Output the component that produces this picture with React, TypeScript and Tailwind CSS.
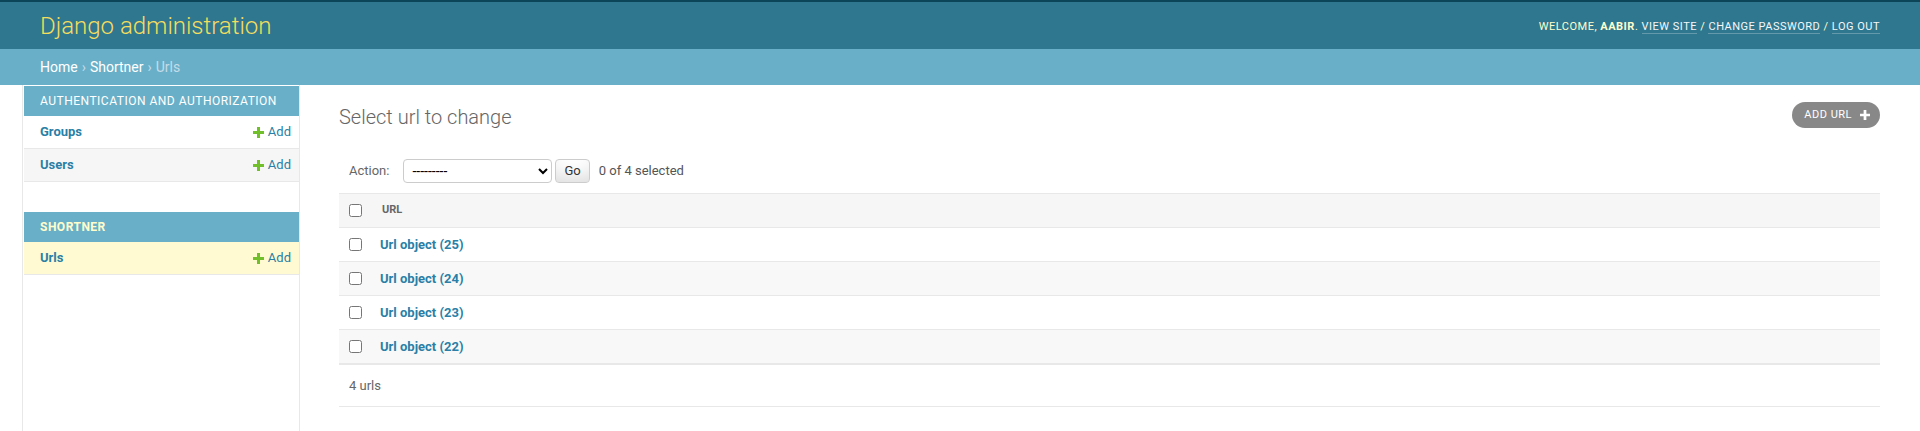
import { useState } from "react";

const LINK = "text-[#2a7fa6]";

function PlusIcon({ color = "#70bf2b", size = 11 }: { color?: string; size?: number }) {
  return (
    <svg width={size} height={size} viewBox="0 0 11 11" className="inline-block shrink-0">
      <path d="M4 0h3v4h4v3H7v4H4V7H0V4h4z" fill={color} />
    </svg>
  );
}

const apps = [
  {
    name: "Authentication and Authorization",
    current: false,
    models: [
      { name: "Groups", current: false },
      { name: "Users", current: false },
    ],
  },
  {
    name: "Shortner",
    current: true,
    models: [{ name: "Urls", current: true }],
  },
];

const urls = [25, 24, 23, 22];

export default function App() {
  const [checked, setChecked] = useState<Record<number, boolean>>({});
  const count = Object.values(checked).filter(Boolean).length;

  return (
    <div className="min-h-[431px] bg-white font-['Roboto','Liberation_Sans',sans-serif] text-[14px] text-[#333] flex flex-col">
      {/* Header */}
      <header className="h-[49px] border-t-2 border-[#0c4557] bg-[#2f778f] px-10 flex items-center justify-between">
        <h1 className="text-[24px] font-light text-[#f5dd5d] leading-[28px]">Django administration</h1>
        <div className="text-[11px] uppercase tracking-[0.5px] text-[#ffc] leading-[14px] pt-[2px]">
          Welcome, <strong className="font-bold">aabir</strong>.{" "}
          <a className="text-[#f4f8fa] border-b border-white/25">View site</a> /{" "}
          <a className="text-[#f4f8fa] border-b border-white/25">Change password</a> /{" "}
          <a className="text-[#f4f8fa] border-b border-white/25">Log out</a>
        </div>
      </header>

      {/* Breadcrumbs */}
      <div className="h-[36px] bg-[#6aafc8] px-10 flex items-center text-[14px] text-[#c4dce8]">
        <a className="text-white">Home</a>
        <span className="mx-[4px]">›</span>
        <a className="text-white">Shortner</a>
        <span className="mx-[4px]">›</span>
        <span>Urls</span>
      </div>

      <div className="flex flex-1">
        {/* Sidebar toggle */}
        <div className="w-[23px] shrink-0 border-r border-[#e8e8e8]" />

        {/* Nav sidebar */}
        <nav className="w-[277px] shrink-0 border-r border-[#e8e8e8] pt-px pl-px">
          {apps.map((app) => (
            <div key={app.name} className="mb-[30px]">
              <div
                className={`h-[30px] bg-[#6aafc8] pl-4 flex items-center text-[12px] uppercase tracking-[0.5px] ${
                  app.current ? "font-bold text-[#ffc]" : "text-white"
                }`}
              >
                {app.name}
              </div>
              {app.models.map((m, i) => (
                <div
                  key={m.name}
                  className={`h-[33px] border-b border-[#e8e8e8] pl-4 pr-2 flex items-center justify-between text-[13px] ${
                    m.current ? "bg-[#fffad2]" : i % 2 === 1 ? "bg-[#f6f6f6]" : "bg-white"
                  }`}
                >
                  <a className={`font-bold ${LINK}`}>{m.name}</a>
                  <a className={`flex items-center gap-[4px] ${LINK}`}>
                    <PlusIcon />
                    Add
                  </a>
                </div>
              ))}
            </div>
          ))}
        </nav>

        {/* Content */}
        <main className="flex-1 pl-[39px] pr-10 pt-5">
          <div className="flex items-start justify-between">
            <h1 className="text-[20px] font-light text-[#666] leading-[24px]">Select url to change</h1>
            <a className="mt-[-3px] h-[26px] rounded-full bg-[#888] pl-3 pr-[10px] flex items-center gap-[8px] text-[11px] uppercase tracking-[0.5px] text-white">
              Add url
              <PlusIcon color="#fff" size={10} />
            </a>
          </div>

          {/* Actions */}
          <div className="mt-[20px] h-[44px] px-[10px] flex items-center text-[13px] text-[#666]">
            <label>Action:</label>
            <select className="ml-[14px] h-[24px] w-[149px] border border-[#ccc] rounded-[4px] pl-[4px] text-[14px] text-black bg-white">
              <option>---------</option>
              <option>Delete selected urls</option>
            </select>
            <button className="ml-[3px] h-[24px] px-2 border border-[#ccc] rounded-[4px] bg-white text-[13px] text-[#333] shadow-[inset_0_-15px_20px_-10px_rgba(0,0,0,0.15)]">
              Go
            </button>
            <span className="ml-[9px] text-[#555]">{count} of 4 selected</span>
          </div>

          {/* Table */}
          <div className="border-t border-[#e8e8e8]">
            <div className="h-[34px] bg-[#f6f6f6] border-b border-[#e8e8e8] flex items-center">
              <div className="w-[41px] pl-[10px] flex items-center">
                <input type="checkbox" className="w-[13px] h-[13px]" />
              </div>
              <span className="ml-[2px] text-[11px] font-bold uppercase text-[#666]">Url</span>
            </div>
            {urls.map((n, i) => (
              <div
                key={n}
                className={`h-[34px] border-b border-[#e8e8e8] flex items-center ${i % 2 === 1 ? "bg-[#f8f8f8]" : "bg-white"}`}
              >
                <div className="w-[41px] pl-[10px] flex items-center">
                  <input
                    type="checkbox"
                    className="w-[13px] h-[13px]"
                    checked={!!checked[n]}
                    onChange={(e) => setChecked({ ...checked, [n]: e.target.checked })}
                  />
                </div>
                <a className={`text-[13px] font-bold ${LINK}`}>Url object ({n})</a>
              </div>
            ))}
          </div>

          {/* Paginator */}
          <div className="h-[43px] border-t border-b border-[#e8e8e8] px-[10px] flex items-center text-[13px] text-[#666]">
            4 urls
          </div>
        </main>
      </div>
    </div>
  );
}
